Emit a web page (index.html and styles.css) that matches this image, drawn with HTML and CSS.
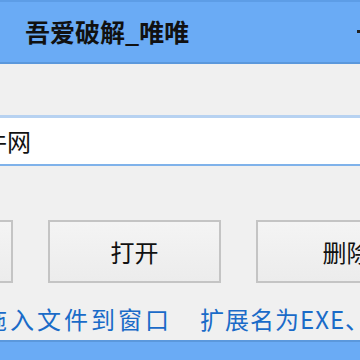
FILE: index.html
```html
<!DOCTYPE html>
<html>
<head>
<meta charset="utf-8">
<link rel="stylesheet" href="styles.css">
</head>
<body>
<div class="window">
  <div class="titlebar">
    <span class="title">吾爱破解_唯唯</span>
    <span class="ctrl"></span>
  </div>
  <div class="panel"></div>
  <div class="textbox"><span class="value">软件网</span></div>
  <div class="body">
    <div class="buttons">
      <div class="btn">选择</div>
      <div class="btn">打开</div>
      <div class="btn">删除</div>
    </div>
    <div class="links">
      <span class="link first">拖入文件到窗口</span>
      <span class="link second">扩展名为EXE、</span>
    </div>
  </div>
  <div class="footer"></div>
</div>
</body>
</html>
```
FILE: styles.css
```css
html, body {
  margin: 0;
  padding: 0;
  width: 360px;
  height: 360px;
  overflow: hidden;
  background: #f0f0f0;
  font-family: "Noto Sans CJK SC", "Noto Sans", sans-serif;
}
.window {
  width: 360px;
  height: 360px;
  display: flex;
  flex-direction: column;
  overflow: hidden;
}
.titlebar {
  height: 60px;
  flex: none;
  background: #6aabf5;
  border-top: 2px solid #5d9de6;
  border-bottom: 2px solid #5b98dc;
  display: flex;
  align-items: center;
  position: relative;
}
.title {
  margin-left: 25px;
  font-size: 25px;
  font-weight: bold;
  color: #111;
  line-height: 1;
  margin-top: -2px;
}
.ctrl {
  position: absolute;
  right: 0;
  top: 28px;
  width: 3px;
  height: 3px;
  background: #222;
}
.panel {
  height: 51px;
  flex: none;
  background: #f0f0f0;
}
.textbox {
  height: 46px;
  flex: none;
  background: #fff;
  border-top: 3px solid #b7d2f1;
  border-bottom: 2px solid #7fb2ea;
  display: flex;
  align-items: center;
  overflow: hidden;
}
.value {
  margin-left: -41px;
  font-size: 24px;
  color: #111;
  line-height: 1;
  white-space: nowrap;
}
.body {
  flex: 1;
  display: flex;
  flex-direction: column;
  padding-top: 54px;
  overflow: hidden;
}
.buttons {
  display: flex;
  gap: 35px;
  margin-left: -160px;
}
.btn {
  flex: none;
  width: 169px;
  height: 59px;
  border: 2px solid #c4c4c4;
  background: linear-gradient(#f4f4f4, #ececec);
  display: flex;
  align-items: center;
  justify-content: center;
  font-size: 24px;
  color: #111;
}
.btn:nth-child(3) {
  padding-left: 4px;
  box-sizing: content-box;
}
.links {
  display: flex;
  margin-top: 24px;
  margin-left: -17px;
  white-space: nowrap;
}
.link {
  font-size: 24px;
  color: #1a6bc8;
  line-height: 1;
}
.link.first {
  letter-spacing: 3px;
  margin-right: 28px;
}
.link.second {
  letter-spacing: 1px;
}
.footer {
  height: 18px;
  flex: none;
  background: #6aabf5;
  border-top: 2px solid #5b98dc;
}
```
